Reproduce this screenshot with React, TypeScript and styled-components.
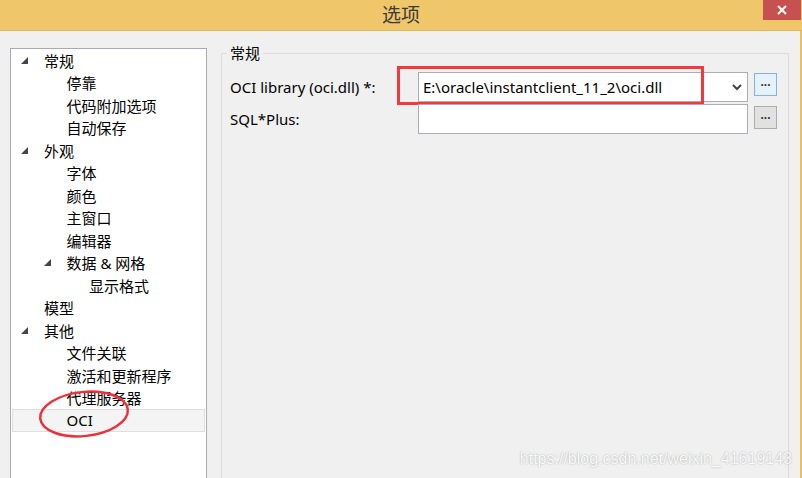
import React from "react";
import styled, { createGlobalStyle } from "styled-components";

const Global = createGlobalStyle`
  html, body { margin: 0; padding: 0; background: #f0f0f0; }
  body { font-family: "Noto Sans", "Noto Sans CJK SC", sans-serif; }
  * { box-sizing: border-box; }
`;

const Window = styled.div`
  position: relative;
  width: 802px;
  height: 478px;
  display: flex;
  flex-direction: column;
  overflow: hidden;
  background: #f0f0f0;
`;

const TitleBar = styled.div`
  height: 31px;
  flex: none;
  display: grid;
  grid-template-columns: 1fr auto 1fr;
  background: #f0c66b;
  border-bottom: 1px solid #dcb45c;
`;

const Title = styled.div`
  grid-column: 2;
  align-self: center;
  font-family: "Noto Sans CJK SC", sans-serif;
  font-size: 19px;
  line-height: 28px;
  color: #3a3a3a;
  padding-bottom: 2px;
`;

const CloseButton = styled.div`
  grid-column: 3;
  justify-self: end;
  align-self: start;
  width: 38px;
  height: 20px;
  margin-right: 1px;
  background: #c75050;
  display: flex;
  align-items: center;
  justify-content: center;
`;

const Body = styled.div`
  flex: 1;
  min-height: 0;
  display: flex;
  gap: 14px;
  padding: 12px 11px 0 10px;
  border-right: 2px solid #e9bf5f;
`;

const TreePanel = styled.div`
  position: relative;
  width: 197px;
  height: 460px;
  flex: none;
  margin-top: 5px;
  background: #ffffff;
  border: 1px solid #a9abb2;
  display: flex;
  flex-direction: column;
`;

const TreeRow = styled.div<{ $level: number; $selected?: boolean }>`
  height: 22.5px;
  display: flex;
  align-items: center;
  padding-left: ${(p) => 8 + p.$level * 22.5}px;
  margin: 0 1px;
  font-size: 15px;
  color: #000;
  white-space: nowrap;
  border: 1px solid ${(p) => (p.$selected ? "#dedede" : "transparent")};
  background: ${(p) => (p.$selected ? "#f4f4f4" : "transparent")};
`;

const Toggle = styled.span`
  width: 23px;
  flex: none;
  display: flex;
  align-items: center;
`;

const Ellipse = styled.svg`
  position: absolute;
  left: 13px;
  top: 333px;
  pointer-events: none;
`;

const Group = styled.fieldset`
  flex: 1;
  margin: 0;
  padding: 9px 8px 0 8px;
  height: 470px;
  border: 1px solid #dcdcdc;
  min-width: 0;
`;

const Legend = styled.legend`
  margin-left: -3px;
  padding: 0 3px;
  font-size: 15px;
  line-height: 20px;
  color: #000;
`;

const Form = styled.div`
  display: grid;
  grid-template-columns: 182px 330px 23px;
  grid-auto-rows: 30px;
  column-gap: 6px;
  row-gap: 2px;
`;

const Label = styled.div`
  font-size: 15px;
  line-height: 30px;
  color: #000;
  white-space: nowrap;
`;

const Field = styled.div`
  position: relative;
  display: flex;
  align-items: center;
  background: #ffffff;
  border: 1px solid #abadb3;
  padding-left: 4px;
  font-size: 15px;
  color: #000;
  white-space: nowrap;
`;

const Chevron = styled.svg`
  margin-left: auto;
  margin-right: 5px;
`;

const Annotation = styled.div`
  position: absolute;
  left: -22px;
  top: -7px;
  width: 307px;
  height: 39px;
  border: 3px solid #ef3a40;
  pointer-events: none;
`;

const Browse = styled.div<{ $focused?: boolean }>`
  width: 23px;
  height: 23px;
  margin-top: ${(p) => (p.$focused ? 1 : 2)}px;
  background: ${(p) => (p.$focused ? "#e5f1fb" : "#e1e1e1")};
  border: 1px solid ${(p) => (p.$focused ? "#7eb4ea" : "#adadad")};
  font-family: "Liberation Sans", sans-serif;
  font-size: 12px;
  font-weight: bold;
  line-height: 17px;
  text-align: center;
  color: #333;
`;

const Watermark = styled.div`
  position: absolute;
  right: 10px;
  bottom: 10px;
  font-family: "Liberation Sans", Arial, sans-serif;
  font-size: 16px;
  color: rgba(255, 255, 255, 0.95);
  text-shadow: 0 0 2px rgba(0, 0, 0, 0.22), 0 0 1px rgba(0, 0, 0, 0.15);
  pointer-events: none;
`;

const Tri = () => (
  <svg width="7" height="7" viewBox="0 0 7 7">
    <polygon points="7,0 7,7 0,7" fill="#454545" />
  </svg>
);

type Item = { label: string; level: number; expanded?: boolean; selected?: boolean };

const items: Item[] = [
  { label: "常规", level: 0, expanded: true },
  { label: "停靠", level: 1 },
  { label: "代码附加选项", level: 1 },
  { label: "自动保存", level: 1 },
  { label: "外观", level: 0, expanded: true },
  { label: "字体", level: 1 },
  { label: "颜色", level: 1 },
  { label: "主窗口", level: 1 },
  { label: "编辑器", level: 1 },
  { label: "数据 & 网格", level: 1, expanded: true },
  { label: "显示格式", level: 2 },
  { label: "模型", level: 0 },
  { label: "其他", level: 0, expanded: true },
  { label: "文件关联", level: 1 },
  { label: "激活和更新程序", level: 1 },
  { label: "代理服务器", level: 1 },
  { label: "OCI", level: 1, selected: true },
];

export default function App() {
  return (
    <>
      <Global />
      <Window>
        <TitleBar>
          <Title>选项</Title>
          <CloseButton>
            <svg width="10" height="10" viewBox="0 0 10 10">
              <path d="M1 1 L9 9 M9 1 L1 9" stroke="#fff" strokeWidth="2" />
            </svg>
          </CloseButton>
        </TitleBar>
        <Body>
          <TreePanel>
            {items.map((it) => (
              <TreeRow key={it.label} $level={it.level} $selected={it.selected}>
                <Toggle>{it.expanded ? <Tri /> : null}</Toggle>
                {it.label}
              </TreeRow>
            ))}
            <Ellipse width="120" height="64" viewBox="0 0 120 64">
              <ellipse
                cx="60"
                cy="32"
                rx="44"
                ry="22"
                fill="none"
                stroke="#e8333b"
                strokeWidth="2.5"
                transform="rotate(-6 60 32)"
              />
            </Ellipse>
          </TreePanel>
          <Group>
            <Legend>常规</Legend>
            <Form>
              <Label>OCI library (oci.dll) *:</Label>
              <Field>
                E:\oracle\instantclient_11_2\oci.dll
                <Chevron width="10" height="7" viewBox="0 0 10 7">
                  <polyline points="1,1 5,5 9,1" fill="none" stroke="#444" strokeWidth="2" />
                </Chevron>
                <Annotation />
              </Field>
              <Browse $focused>...</Browse>
              <Label>SQL*Plus:</Label>
              <Field />
              <Browse>...</Browse>
            </Form>
          </Group>
        </Body>
        <Watermark>https://blog.csdn.net/weixin_41619143</Watermark>
      </Window>
    </>
  );
}
